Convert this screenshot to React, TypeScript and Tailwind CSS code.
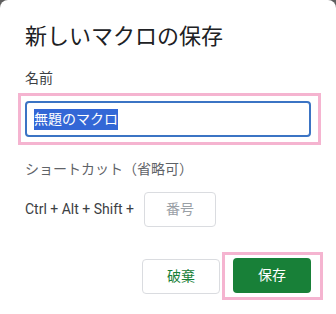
export default function App() {
  return (
    <div className="h-[314px] w-[336px] overflow-hidden bg-[#5f5f5f] font-['Roboto','Noto_Sans_CJK_JP',sans-serif]">
      <div className="flex h-full flex-col rounded-t-[8px] bg-white px-[25px] pt-[22px]">
        {/* title */}
        <h2 className="text-[22px] leading-[30px] text-[#202124]">新しいマクロの保存</h2>

        <div className="mt-[16px] text-[14px] leading-[20px] text-[#3c4043]">名前</div>

        {/* name field (pink frame is an annotation) */}
        <div className="relative mt-[13px]">
          <div className="pointer-events-none absolute -bottom-[8px] -left-[7px] -right-[10px] -top-[8px] border-[3px] border-[#f5b4d0]" />
          <div className="flex h-[36px] items-center rounded-[4px] border-2 border-[#3b74c4] px-[7px]">
            <span className="bg-[#3367d6] text-[14px] leading-[21px] text-white">無題のマクロ</span>
          </div>
        </div>

        <div className="mt-[22px] text-[14px] leading-[20px] text-[#5f6368]">ショートカット（省略可）</div>

        <div className="mt-[13px] flex items-center gap-[10px]">
          <span className="text-[14px] text-[#3c4043]">Ctrl + Alt + Shift +</span>
          <div className="flex h-[35px] w-[72px] items-center justify-center rounded-[4px] border border-[#dadce0] text-[14px] text-[#9aa0a6]">
            番号
          </div>
        </div>

        {/* footer buttons */}
        <div className="mt-[31px] flex justify-end gap-[13px]">
          <button
            type="button"
            className="mt-px h-[35px] w-[78px] rounded-[4px] border border-[#dadce0] bg-white text-[14px] text-[#188038]"
          >
            破棄
          </button>
          <div className="relative">
            <div className="pointer-events-none absolute -bottom-[6px] -left-[11px] -right-[12px] -top-[6px] border-[3px] border-[#f5b4d0]" />
            <button
              type="button"
              className="h-[35px] w-[78px] rounded-[4px] bg-[#188038] text-[14px] text-white"
            >
              保存
            </button>
          </div>
        </div>
      </div>
    </div>
  );
}
